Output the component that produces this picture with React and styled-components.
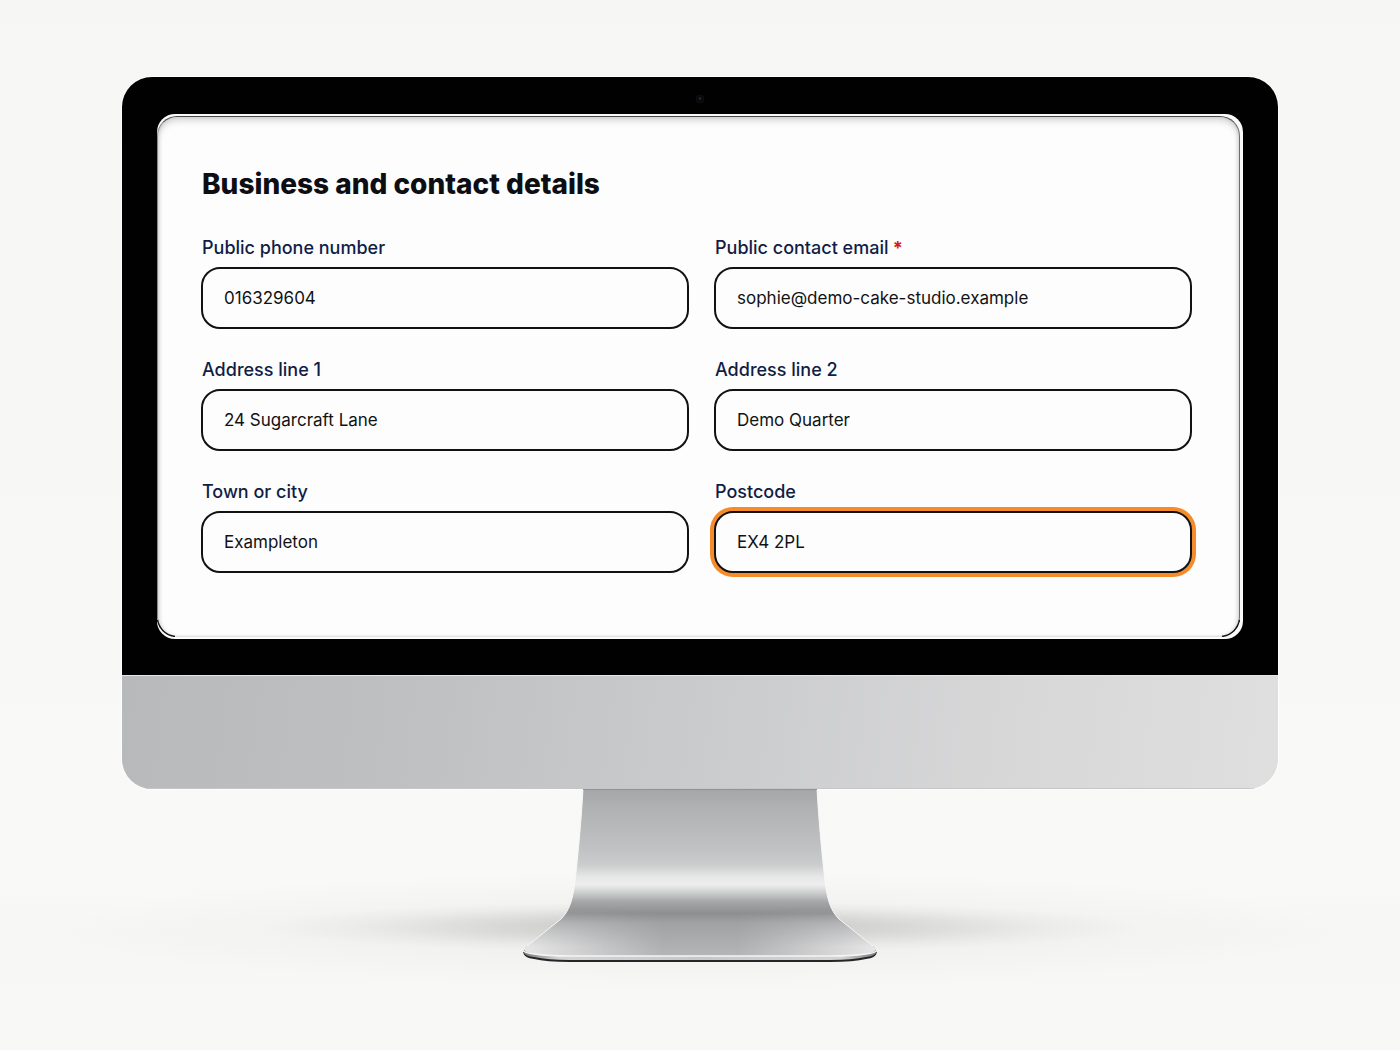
import React from "react";
import styled, { createGlobalStyle } from "styled-components";

const GlobalStyle = createGlobalStyle`
  *, *::before, *::after { box-sizing: border-box; }
  body {
    margin: 0;
    background: #f7f7f5;
    font-family: Inter, "Liberation Sans", sans-serif;
    color: #0c0e14;
  }
`;

const Page = styled.main`
  min-height: 100vh;
  display: flex;
  flex-direction: column;
  padding-top: 77px;
  background: linear-gradient(#f6f6f4 0%, #f8f8f7 60%, #f9f9f7 84%, #f6f6f4 89%, #f8f8f6 95%, #f8f8f6 100%);
`;

const Monitor = styled.div`
  margin: 0 122px;
  border-radius: 30px;
  overflow: hidden;
  box-shadow: 0 0 0 1px #fdfdfd;
`;

const Bezel = styled.div`
  position: relative;
  padding: 37px 35px 36px 35px;
  background: #010101;
`;

const Camera = styled.svg`
  position: absolute;
  top: 16px;
  left: 50%;
  width: 12px;
  height: 12px;
  margin-left: -6px;
`;

const Glass = styled.div`
  padding: 2px 3px 2px 0;
  border-radius: 18px;
  background: #fafafa;
`;

const Panel = styled.div`
  position: relative;
  padding: 49px 47px 63px 43px;
  border: 1px solid;
  border-color: #4a4a4a #6e6e6e #e2e2e2 #8a8a8a;
  border-radius: 20px;
  background: #fdfdfd;
  box-shadow: inset 0 6px 8px -4px #c4c4c4, inset 3px 0 5px -3px #bbbbbb, inset -3px 0 5px -3px #bbbbbb;
`;

const CornerArc = styled.svg`
  position: absolute;
  bottom: -1px;
  ${({ $side }) => $side}: -1px;
  width: 20px;
  height: 20px;
  transform: ${({ $side }) => ($side === "right" ? "scaleX(-1)" : "none")};
`;

const Title = styled.h1`
  margin: 0 0 34px;
  padding-left: 1px;
  font-size: 28px;
  line-height: 36px;
  font-weight: 800;
`;

const Fields = styled.form`
  display: grid;
  grid-template-columns: 488fr 478fr;
  gap: 29px 25px;
`;

const Field = styled.div`
  display: flex;
  flex-direction: column;
  gap: 7px;
`;

const Label = styled.label`
  padding-left: 1px;
  font-size: 18px;
  line-height: 24px;
  font-weight: 500;
  color: #111d45;
`;

const Required = styled.span`
  color: #dc1616;
  font-weight: 700;
`;

const TextInput = styled.input`
  width: 100%;
  height: 62px;
  padding: 0 21px;
  border: 2px solid #111214;
  border-radius: 19px;
  outline: none;
  background: #fdfdfd;
  color: #111214;
  font-family: inherit;
  font-size: 17px;
  line-height: 24px;
  box-shadow: ${({ $active }) => ($active ? "0 0 0 4px #f68b2c" : "none")};
`;

const Chin = styled.div`
  height: 114px;
  border-top: 1px solid #e6e6e6;
  background: linear-gradient(97deg, #b8b9bb 0%, #bfc0c2 25%, #cacbcd 50%, #d7d7d8 76%, #dfdfdf 100%);
  box-shadow: inset 0 -1px 0 #c6c6c8;
`;

const Floor = styled.div`
  flex: 1;
  display: flex;
  justify-content: center;
  align-items: flex-start;
  background:
    radial-gradient(ellipse 440px 26px at 50% 138px, rgba(110, 110, 106, 0.34), rgba(120, 120, 116, 0.2) 45%, rgba(130, 130, 126, 0.06) 78%, transparent),
    radial-gradient(ellipse 640px 60px at 50% 140px, rgba(150, 150, 146, 0.1), transparent);
`;

const StandArt = styled.svg`
  display: block;
  width: 356px;
  height: 180px;
`;

const fields = [
  { id: "phone", label: "Public phone number", value: "016329604", type: "tel" },
  { id: "email", label: "Public contact email", value: "sophie@demo-cake-studio.example", type: "email", required: true },
  { id: "address1", label: "Address line 1", value: "24 Sugarcraft Lane", type: "text" },
  { id: "address2", label: "Address line 2", value: "Demo Quarter", type: "text" },
  { id: "town", label: "Town or city", value: "Exampleton", type: "text" },
  { id: "postcode", label: "Postcode", value: "EX4 2PL", type: "text", active: true },
];

function Arc({ side }) {
  return (
    <CornerArc $side={side} viewBox="0 0 20 20" aria-hidden="true">
      <path d="M.5 3C2 11 8 18 18 19.5" fill="none" stroke="#141414" strokeWidth="1.4" />
    </CornerArc>
  );
}

function Stand() {
  return (
    <StandArt viewBox="0 0 356 180" aria-hidden="true">
      <defs>
        <linearGradient id="metal" x1="0" y1="0" x2="0" y2="168" gradientUnits="userSpaceOnUse">
          <stop offset="0" stopColor="#a5a6a8" />
          <stop offset=".12" stopColor="#b1b2b4" />
          <stop offset=".35" stopColor="#c0c1c3" />
          <stop offset=".45" stopColor="#cbcccd" />
          <stop offset=".52" stopColor="#e6e6e6" />
          <stop offset=".57" stopColor="#eeeeee" />
          <stop offset=".61" stopColor="#d2d3d4" />
          <stop offset=".67" stopColor="#a6a7a9" />
          <stop offset=".74" stopColor="#8e8f91" />
          <stop offset=".8" stopColor="#a1a2a4" />
          <stop offset="1" stopColor="#b5b6b8" />
        </linearGradient>
        <linearGradient id="sheen" x1="0" x2="1">
          <stop offset="0" stopColor="#e9e9e9" stopOpacity=".95" />
          <stop offset=".16" stopColor="#e4e4e4" stopOpacity=".6" />
          <stop offset=".4" stopColor="#dddddd" stopOpacity="0" />
          <stop offset=".6" stopColor="#dddddd" stopOpacity="0" />
          <stop offset=".84" stopColor="#e4e4e4" stopOpacity=".6" />
          <stop offset="1" stopColor="#e9e9e9" stopOpacity=".95" />
        </linearGradient>
        <linearGradient id="fade" x1="0" y1="120" x2="0" y2="158" gradientUnits="userSpaceOnUse">
          <stop offset="0" stopColor="#000000" />
          <stop offset="1" stopColor="#ffffff" />
        </linearGradient>
        <mask id="base">
          <rect width="356" height="180" fill="url(#fade)" />
        </mask>
        <linearGradient id="edge" x1="0" x2="1">
          <stop offset="0" stopColor="#77787a" />
          <stop offset=".1" stopColor="#d4d4d4" />
          <stop offset=".5" stopColor="#c6c7c8" />
          <stop offset=".9" stopColor="#d4d4d4" />
          <stop offset="1" stopColor="#77787a" />
        </linearGradient>
      </defs>
      <path d="M1 163Q2 169 12 170Q24 173 48 173H308Q332 173 344 170Q354 169 355 163Z" fill="#242526" />
      <path d="M1 161Q1 167 12 168Q26 171 48 171H308Q330 171 344 168Q355 167 355 161Z" fill="url(#edge)" />
      <path
        d="M61 0H295C297 34 300 66 303 92C305 109 308 121 317 130L351 157Q357 162 348 164Q336 167 308 167H48Q20 167 8 164Q-1 162 5 157L39 130C48 121 51 109 53 92C56 66 59 34 61 0Z"
        fill="url(#metal)"
      />
      <path
        d="M45 120H311L317 130L351 157Q357 162 348 164Q336 167 308 167H48Q20 167 8 164Q-1 162 5 157L39 130Z"
        fill="url(#sheen)"
        mask="url(#base)"
      />
      <path d="M1 161Q2 164 12 165Q26 167 48 167H308Q330 167 344 165Q354 164 355 161" fill="none" stroke="#f5f5f5" strokeWidth="1.5" />
      <path
        d="M61 0C59 34 56 66 53 92C51 109 48 121 39 130L5 157M295 0C297 34 300 66 303 92C305 109 308 121 317 130L351 157"
        fill="none"
        stroke="#f8f8f8"
        strokeWidth="1"
      />
      <path d="M61 .5H295" stroke="#929395" />
    </StandArt>
  );
}

export default function App() {
  return (
    <>
      <GlobalStyle />
      <Page>
        <Monitor>
          <Bezel>
            <Camera viewBox="0 0 12 12" aria-hidden="true">
              <circle cx="6" cy="6" r="4" fill="#08080a" stroke="#0e0e10" />
              <circle cx="6" cy="5.5" r="1.3" fill="#27283a" />
            </Camera>
            <Glass>
              <Panel>
                <Title>Business and contact details</Title>
                <Fields>
                  {fields.map((f) => (
                    <Field key={f.id}>
                      <Label htmlFor={f.id}>
                        {f.label}
                        {f.required && <Required> *</Required>}
                      </Label>
                      <TextInput id={f.id} type={f.type} defaultValue={f.value} required={f.required} $active={f.active} />
                    </Field>
                  ))}
                </Fields>
                <Arc side="left" />
                <Arc side="right" />
              </Panel>
            </Glass>
          </Bezel>
          <Chin />
        </Monitor>
        <Floor>
          <Stand />
        </Floor>
      </Page>
    </>
  );
}
